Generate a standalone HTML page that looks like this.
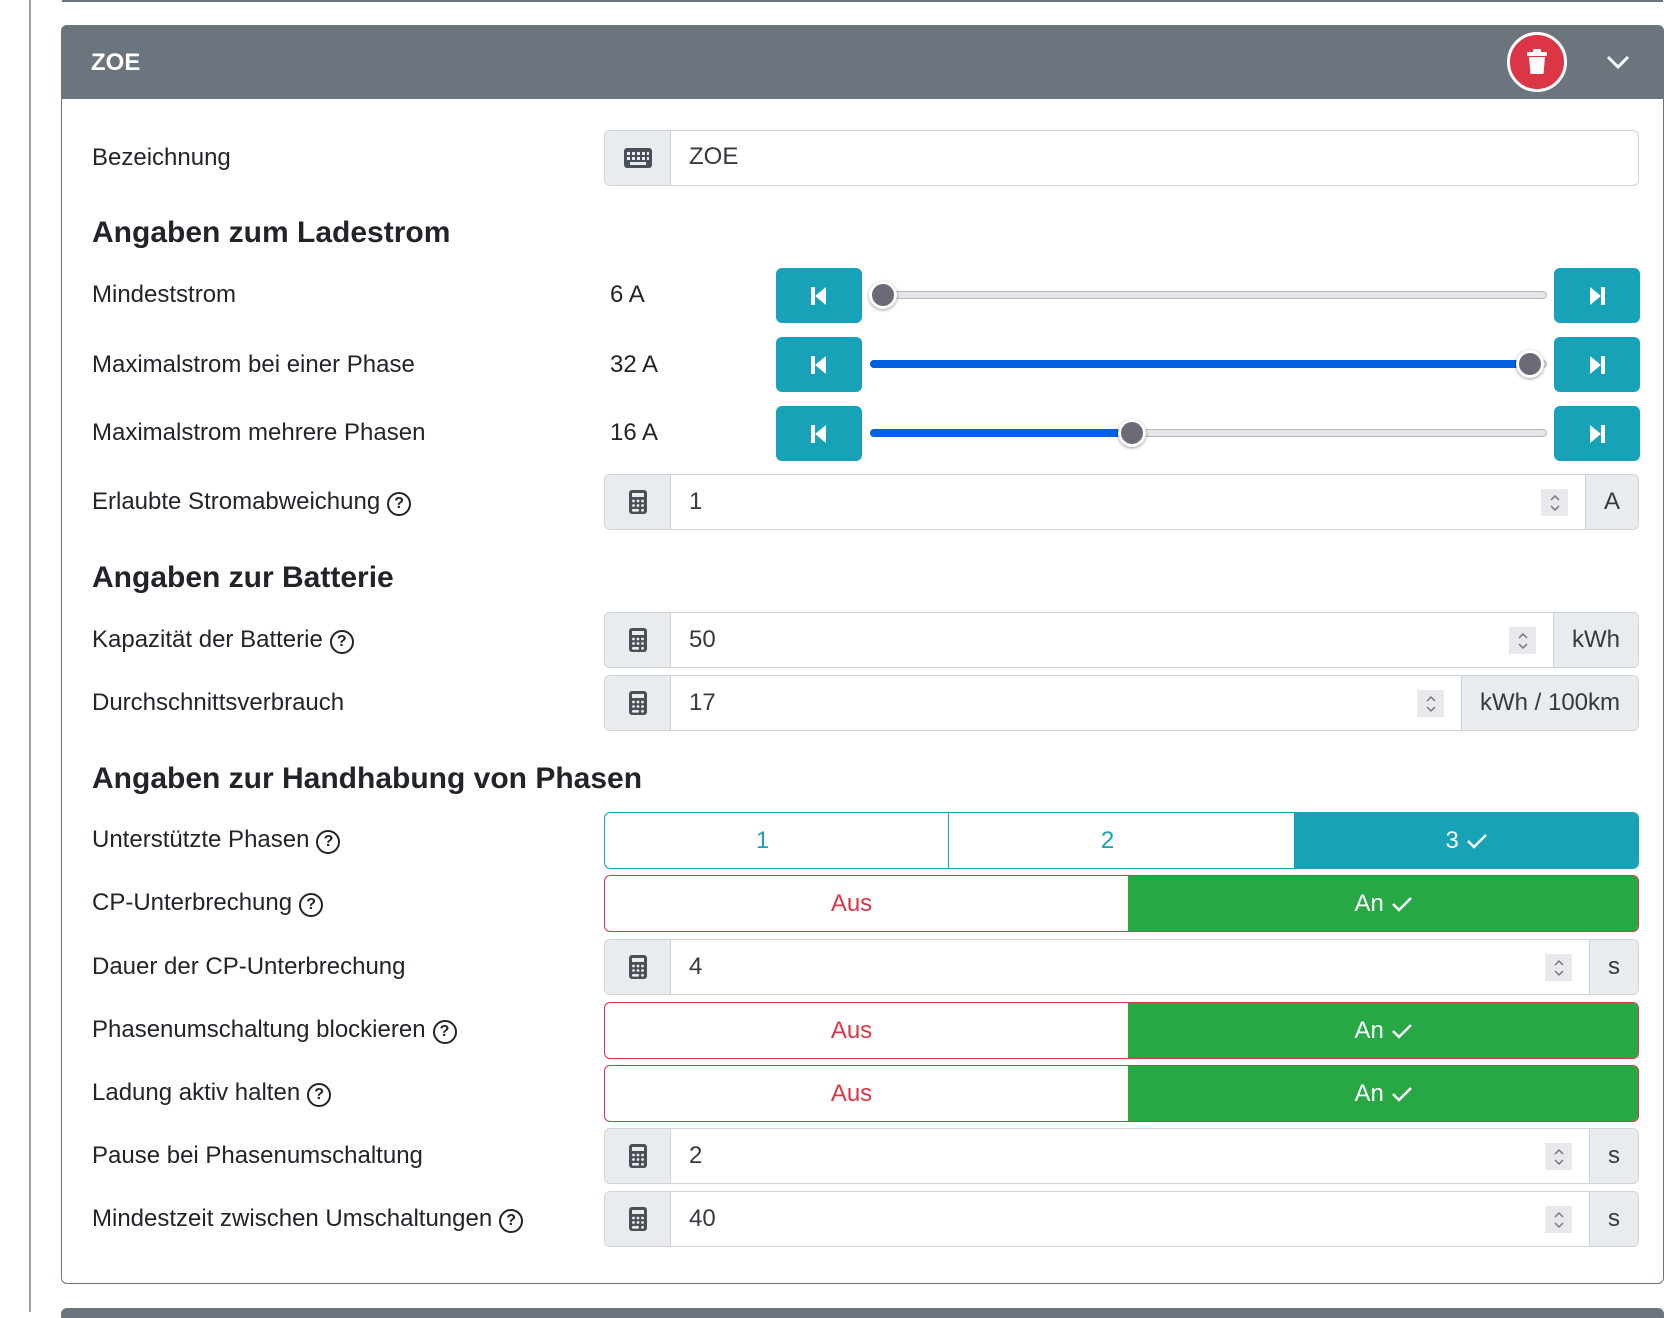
<!DOCTYPE html>
<html><head><meta charset="utf-8"><style>
*{box-sizing:border-box;margin:0;padding:0}
body{width:1672px;height:1312px;background:#fff;position:relative;overflow:hidden;font-family:"Liberation Sans",Arial,sans-serif;color:#212529}
.a{position:absolute}
.lbl{position:absolute;left:92px;font-size:24px;line-height:30px;transform:translateY(-15px);white-space:nowrap}
.h{position:absolute;left:92px;font-size:30px;font-weight:bold;line-height:36px;transform:translateY(-17px)}
.q{display:inline-block;width:24px;height:24px;border:2.2px solid #212529;border-radius:50%;font-size:16px;font-weight:bold;text-align:center;line-height:20px;vertical-align:1px;margin-left:7px}
.grp{position:absolute;left:604px;right:33px;height:56px;border:1px solid #ced4da;border-radius:6px;overflow:hidden;background:#fff}
.ico{position:absolute;left:0;top:0;bottom:0;width:66px;background:#e9ecef;border-right:1px solid #ced4da;display:flex;align-items:center;justify-content:center}
.val{position:absolute;left:84px;top:0;line-height:54px;font-size:24px;color:#343a40}
.unit{position:absolute;right:0;top:0;bottom:0;background:#e9ecef;border-left:1px solid #ced4da;font-size:24px;line-height:54px;text-align:center;color:#343a40}
.spin{position:absolute;top:14px;width:27px;height:27px;background:#e9e9ed;display:flex;align-items:center;justify-content:center}
.btn{position:absolute;width:86px;height:55px;background:#17a2b8;border-radius:6px;display:flex;align-items:center;justify-content:center}
.track{position:absolute;left:870px;width:677px;height:8px;border-radius:4px;background:#e6e5ea;border:1px solid #b8b8c0}
.fill{position:absolute;left:870px;height:8px;border-radius:4px;background:#0060df}
.thumb{position:absolute;width:28px;height:28px;border-radius:50%;background:#6b6b78;border:3px solid #fff;box-shadow:0 1px 3px rgba(0,0,0,.4)}
.num{position:absolute;left:610px;font-size:24px;line-height:30px;transform:translateY(-15px)}
.tg{position:absolute;height:57px;font-size:24px;display:flex;align-items:center;justify-content:center}
</style></head><body>
<div class="a" style="left:29px;top:0;width:2px;height:1312px;background:#9aa0a6"></div>
<div class="a" style="left:62px;top:0;width:1601px;height:2px;background:#6c757d"></div>
<div class="a" style="left:61px;top:25px;width:1603px;height:1259px;border:1.5px solid #6c757d;border-radius:6px"></div>
<div class="a" style="left:61px;top:25px;width:1603px;height:74px;background:#6c757d;border-radius:6px 6px 0 0"></div>
<div class="a" style="left:91px;top:49px;color:#fff;font-size:24px;font-weight:bold;line-height:28px">ZOE</div>
<div class="a" style="left:1507px;top:32px;width:60px;height:60px;border-radius:50%;background:#dc3545;border:3px solid #fff;display:flex;align-items:center;justify-content:center">
<svg width="22" height="26" viewBox="0 0 22 26"><rect x="1" y="3" width="20" height="4" rx="1" fill="#fff"/><rect x="7" y="0" width="8" height="4" rx="1" fill="#fff"/><path d="M3 8h16l-1.5 17h-13z" fill="#fff"/></svg></div>
<svg class="a" style="left:1606px;top:54px" width="24" height="16" viewBox="0 0 24 16"><path d="M2 3l10 10 10-10" stroke="#fff" stroke-width="3" fill="none"/></svg>
<div class="a" style="left:61px;top:1308px;width:1603px;height:10px;background:#6c757d;border-radius:6px 6px 0 0"></div>

<div class="lbl" style="top:158px">Bezeichnung</div>
<div class="grp" style="top:130px"><div class="ico"><svg width="28" height="20" viewBox="0 0 28 20"><rect width="28" height="20" rx="3" fill="#495057"/><g fill="#e9ecef"><rect x="3" y="4" width="3" height="3"/><rect x="8" y="4" width="3" height="3"/><rect x="13" y="4" width="3" height="3"/><rect x="18" y="4" width="3" height="3"/><rect x="23" y="4" width="2" height="3"/><rect x="3" y="9" width="3" height="3"/><rect x="8" y="9" width="3" height="3"/><rect x="13" y="9" width="3" height="3"/><rect x="18" y="9" width="3" height="3"/><rect x="23" y="9" width="2" height="3"/><rect x="6" y="14" width="16" height="3"/></g></svg></div><div class="val" style="top:-1px">ZOE</div></div>

<div class="h" style="top:232px">Angaben zum Ladestrom</div>

<div class="lbl" style="top:295px">Mindeststrom</div>
<div class="num" style="top:295px">6 A</div>
<div class="lbl" style="top:365px">Maximalstrom bei einer Phase</div>
<div class="num" style="top:365px">32 A</div>
<div class="lbl" style="top:433px">Maximalstrom mehrere Phasen</div>
<div class="num" style="top:433px">16 A</div>

<div class="btn" style="left:776px;top:268px"><svg width="16" height="18" viewBox="0 0 16 18"><rect x="0" y="0" width="4" height="18" fill="#fff"/><path d="M15 0v18L4 9z" fill="#fff"/></svg></div>
<div class="btn" style="left:1554px;top:268px"><svg width="16" height="18" viewBox="0 0 16 18"><rect x="12" y="0" width="4" height="18" fill="#fff"/><path d="M1 0v18l11-9z" fill="#fff"/></svg></div>
<div class="track" style="top:291px"></div>
<div class="thumb" style="left:869px;top:281px"></div>

<div class="btn" style="left:776px;top:337px"><svg width="16" height="18" viewBox="0 0 16 18"><rect x="0" y="0" width="4" height="18" fill="#fff"/><path d="M15 0v18L4 9z" fill="#fff"/></svg></div>
<div class="btn" style="left:1554px;top:337px"><svg width="16" height="18" viewBox="0 0 16 18"><rect x="12" y="0" width="4" height="18" fill="#fff"/><path d="M1 0v18l11-9z" fill="#fff"/></svg></div>
<div class="track" style="top:360px"></div>
<div class="fill" style="top:360px;width:665px"></div>
<div class="thumb" style="left:1516px;top:350px"></div>

<div class="btn" style="left:776px;top:406px"><svg width="16" height="18" viewBox="0 0 16 18"><rect x="0" y="0" width="4" height="18" fill="#fff"/><path d="M15 0v18L4 9z" fill="#fff"/></svg></div>
<div class="btn" style="left:1554px;top:406px"><svg width="16" height="18" viewBox="0 0 16 18"><rect x="12" y="0" width="4" height="18" fill="#fff"/><path d="M1 0v18l11-9z" fill="#fff"/></svg></div>
<div class="track" style="top:429px"></div>
<div class="fill" style="top:429px;width:262px"></div>
<div class="thumb" style="left:1118px;top:419px"></div>

<div class="lbl" style="top:502px">Erlaubte Stromabweichung<span class="q">?</span></div>
<div class="grp" style="top:474px"><div class="ico"><svg width="18" height="24" viewBox="0 0 18 24"><rect width="18" height="24" rx="3" fill="#495057"/><rect x="3" y="3" width="12" height="4" fill="#e9ecef"/><g fill="#e9ecef"><circle cx="4.5" cy="11" r="1.4"/><circle cx="9" cy="11" r="1.4"/><circle cx="13.5" cy="11" r="1.4"/><circle cx="4.5" cy="15.5" r="1.4"/><circle cx="9" cy="15.5" r="1.4"/><circle cx="13.5" cy="15.5" r="1.4"/><rect x="3" y="19" width="7" height="2.6" rx="1"/><circle cx="13.5" cy="20.3" r="1.4"/></g></svg></div><div class="val">1</div><div class="spin" style="left:936px"><svg width="12" height="20" viewBox="0 0 12 20"><path d="M2 7l4-4 4 4M2 13l4 4 4-4" stroke="#777" stroke-width="1.5" fill="none"/></svg></div><div class="unit" style="width:53px">A</div></div>

<div class="h" style="top:577px">Angaben zur Batterie</div>

<div class="lbl" style="top:640px">Kapazität der Batterie<span class="q">?</span></div>
<div class="grp" style="top:612px"><div class="ico"><svg width="18" height="24" viewBox="0 0 18 24"><rect width="18" height="24" rx="3" fill="#495057"/><rect x="3" y="3" width="12" height="4" fill="#e9ecef"/><g fill="#e9ecef"><circle cx="4.5" cy="11" r="1.4"/><circle cx="9" cy="11" r="1.4"/><circle cx="13.5" cy="11" r="1.4"/><circle cx="4.5" cy="15.5" r="1.4"/><circle cx="9" cy="15.5" r="1.4"/><circle cx="13.5" cy="15.5" r="1.4"/><rect x="3" y="19" width="7" height="2.6" rx="1"/><circle cx="13.5" cy="20.3" r="1.4"/></g></svg></div><div class="val">50</div><div class="spin" style="left:904px"><svg width="12" height="20" viewBox="0 0 12 20"><path d="M2 7l4-4 4 4M2 13l4 4 4-4" stroke="#777" stroke-width="1.5" fill="none"/></svg></div><div class="unit" style="width:85px">kWh</div></div>

<div class="lbl" style="top:703px">Durchschnittsverbrauch</div>
<div class="grp" style="top:675px"><div class="ico"><svg width="18" height="24" viewBox="0 0 18 24"><rect width="18" height="24" rx="3" fill="#495057"/><rect x="3" y="3" width="12" height="4" fill="#e9ecef"/><g fill="#e9ecef"><circle cx="4.5" cy="11" r="1.4"/><circle cx="9" cy="11" r="1.4"/><circle cx="13.5" cy="11" r="1.4"/><circle cx="4.5" cy="15.5" r="1.4"/><circle cx="9" cy="15.5" r="1.4"/><circle cx="13.5" cy="15.5" r="1.4"/><rect x="3" y="19" width="7" height="2.6" rx="1"/><circle cx="13.5" cy="20.3" r="1.4"/></g></svg></div><div class="val">17</div><div class="spin" style="left:812px"><svg width="12" height="20" viewBox="0 0 12 20"><path d="M2 7l4-4 4 4M2 13l4 4 4-4" stroke="#777" stroke-width="1.5" fill="none"/></svg></div><div class="unit" style="width:177px">kWh / 100km</div></div>

<div class="h" style="top:778px">Angaben zur Handhabung von Phasen</div>

<div class="lbl" style="top:840px">Unterstützte Phasen<span class="q">?</span></div>
<div class="a" style="left:604px;top:812px;width:1035px;height:57px;border:1px solid #17a2b8;border-radius:6px;overflow:hidden">
<div class="tg" style="left:0;top:0;width:344px;height:55px;color:#17a2b8;border-right:1px solid #17a2b8;padding-right:28px">1</div>
<div class="tg" style="left:344px;top:0;width:345px;height:55px;color:#17a2b8;padding-right:28px">2</div>
<div class="tg" style="left:689px;top:-1px;right:-1px;background:#17a2b8;color:#fff">3&nbsp;<svg width="22" height="16" viewBox="0 0 22 16"><path d="M2 8l6 6L20 2" stroke="#fff" stroke-width="2.5" fill="none"/></svg></div></div>

<div class="lbl" style="top:903px">CP-Unterbrechung<span class="q">?</span></div>
<div class="a" style="left:604px;top:875px;width:1035px;height:57px;border:1px solid #dc3545;border-radius:6px;overflow:hidden">
<div class="tg" style="left:0;top:0;width:523px;height:55px;color:#dc3545;padding-right:30px">Aus</div>
<div class="tg" style="left:523px;top:-1px;right:-1px;background:#28a745;color:#fff">An&nbsp;<svg width="22" height="16" viewBox="0 0 22 16"><path d="M2 8l6 6L20 2" stroke="#fff" stroke-width="2.5" fill="none"/></svg></div></div>

<div class="lbl" style="top:967px">Dauer der CP-Unterbrechung</div>
<div class="grp" style="top:939px"><div class="ico"><svg width="18" height="24" viewBox="0 0 18 24"><rect width="18" height="24" rx="3" fill="#495057"/><rect x="3" y="3" width="12" height="4" fill="#e9ecef"/><g fill="#e9ecef"><circle cx="4.5" cy="11" r="1.4"/><circle cx="9" cy="11" r="1.4"/><circle cx="13.5" cy="11" r="1.4"/><circle cx="4.5" cy="15.5" r="1.4"/><circle cx="9" cy="15.5" r="1.4"/><circle cx="13.5" cy="15.5" r="1.4"/><rect x="3" y="19" width="7" height="2.6" rx="1"/><circle cx="13.5" cy="20.3" r="1.4"/></g></svg></div><div class="val">4</div><div class="spin" style="left:940px"><svg width="12" height="20" viewBox="0 0 12 20"><path d="M2 7l4-4 4 4M2 13l4 4 4-4" stroke="#777" stroke-width="1.5" fill="none"/></svg></div><div class="unit" style="width:49px">s</div></div>

<div class="lbl" style="top:1030px">Phasenumschaltung blockieren<span class="q">?</span></div>
<div class="a" style="left:604px;top:1002px;width:1035px;height:57px;border:1px solid #dc3545;border-radius:6px;overflow:hidden">
<div class="tg" style="left:0;top:0;width:523px;height:55px;color:#dc3545;padding-right:30px">Aus</div>
<div class="tg" style="left:523px;top:-1px;right:-1px;background:#28a745;color:#fff">An&nbsp;<svg width="22" height="16" viewBox="0 0 22 16"><path d="M2 8l6 6L20 2" stroke="#fff" stroke-width="2.5" fill="none"/></svg></div></div>

<div class="lbl" style="top:1093px">Ladung aktiv halten<span class="q">?</span></div>
<div class="a" style="left:604px;top:1065px;width:1035px;height:57px;border:1px solid #dc3545;border-radius:6px;overflow:hidden">
<div class="tg" style="left:0;top:0;width:523px;height:55px;color:#dc3545;padding-right:30px">Aus</div>
<div class="tg" style="left:523px;top:-1px;right:-1px;background:#28a745;color:#fff">An&nbsp;<svg width="22" height="16" viewBox="0 0 22 16"><path d="M2 8l6 6L20 2" stroke="#fff" stroke-width="2.5" fill="none"/></svg></div></div>

<div class="lbl" style="top:1156px">Pause bei Phasenumschaltung</div>
<div class="grp" style="top:1128px"><div class="ico"><svg width="18" height="24" viewBox="0 0 18 24"><rect width="18" height="24" rx="3" fill="#495057"/><rect x="3" y="3" width="12" height="4" fill="#e9ecef"/><g fill="#e9ecef"><circle cx="4.5" cy="11" r="1.4"/><circle cx="9" cy="11" r="1.4"/><circle cx="13.5" cy="11" r="1.4"/><circle cx="4.5" cy="15.5" r="1.4"/><circle cx="9" cy="15.5" r="1.4"/><circle cx="13.5" cy="15.5" r="1.4"/><rect x="3" y="19" width="7" height="2.6" rx="1"/><circle cx="13.5" cy="20.3" r="1.4"/></g></svg></div><div class="val">2</div><div class="spin" style="left:940px"><svg width="12" height="20" viewBox="0 0 12 20"><path d="M2 7l4-4 4 4M2 13l4 4 4-4" stroke="#777" stroke-width="1.5" fill="none"/></svg></div><div class="unit" style="width:49px">s</div></div>

<div class="lbl" style="top:1219px">Mindestzeit zwischen Umschaltungen<span class="q">?</span></div>
<div class="grp" style="top:1191px"><div class="ico"><svg width="18" height="24" viewBox="0 0 18 24"><rect width="18" height="24" rx="3" fill="#495057"/><rect x="3" y="3" width="12" height="4" fill="#e9ecef"/><g fill="#e9ecef"><circle cx="4.5" cy="11" r="1.4"/><circle cx="9" cy="11" r="1.4"/><circle cx="13.5" cy="11" r="1.4"/><circle cx="4.5" cy="15.5" r="1.4"/><circle cx="9" cy="15.5" r="1.4"/><circle cx="13.5" cy="15.5" r="1.4"/><rect x="3" y="19" width="7" height="2.6" rx="1"/><circle cx="13.5" cy="20.3" r="1.4"/></g></svg></div><div class="val">40</div><div class="spin" style="left:940px"><svg width="12" height="20" viewBox="0 0 12 20"><path d="M2 7l4-4 4 4M2 13l4 4 4-4" stroke="#777" stroke-width="1.5" fill="none"/></svg></div><div class="unit" style="width:49px">s</div></div>
</body></html>
